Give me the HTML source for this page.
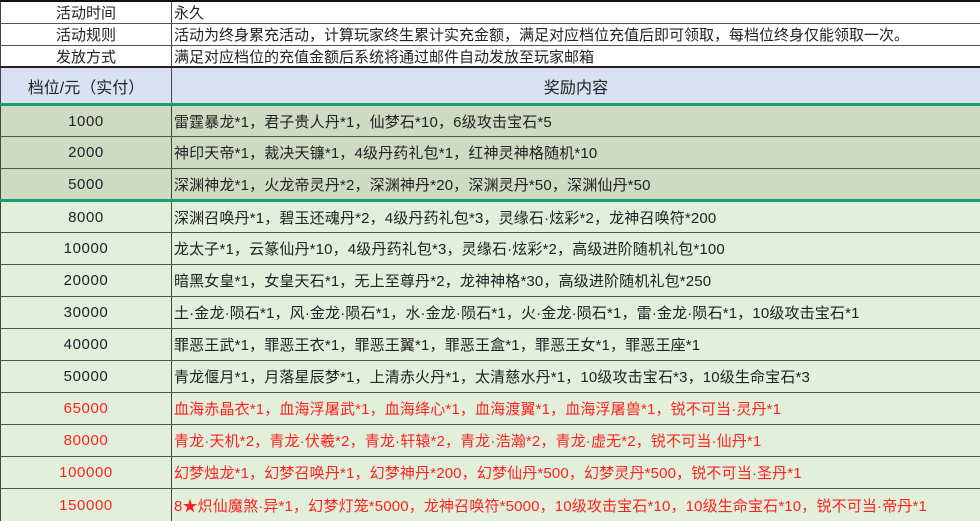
<!DOCTYPE html>
<html><head><meta charset="utf-8"><style>
*{margin:0;padding:0;box-sizing:border-box}
body{width:980px;height:521px;overflow:hidden;background:#fff;font-family:"Liberation Sans","Noto Sans CJK SC",sans-serif;font-size:15px;color:#222;position:relative}
.r{position:absolute;left:0;width:980px;border-bottom:1px solid #555}
.c1{position:absolute;left:0;width:172px;top:0;bottom:0;border-right:1.5px solid #444;border-left:1px solid #444;display:flex;align-items:center;justify-content:center;letter-spacing:0.6px}
.c2{position:absolute;left:174px;right:0;top:0;bottom:0;display:flex;align-items:center;white-space:nowrap;letter-spacing:0.15px}
.red{color:#f22}
.g1{background:#cfdac3}.g2{background:#e2efda}
</style></head><body>
<div style="position:absolute;left:0;top:0;width:980px;height:2px;background:#111"></div>
<div class="r" style="top:2px;height:22px"><div class="c1" style="letter-spacing:0">活动时间</div><div class="c2" style="letter-spacing:0">永久</div></div>
<div class="r" style="top:24px;height:22px"><div class="c1" style="letter-spacing:0">活动规则</div><div class="c2" style="letter-spacing:0">活动为终身累充活动，计算玩家终生累计实充金额，满足对应档位充值后即可领取，每档位终身仅能领取一次。</div></div>
<div class="r" style="top:46px;height:22px;border-bottom:2px solid #222"><div class="c1" style="letter-spacing:0">发放方式</div><div class="c2" style="letter-spacing:0">满足对应档位的充值金额后系统将通过邮件自动发放至玩家邮箱</div></div>
<div class="r" style="top:68px;height:35px;background:#d9e1f2;border-bottom:none"><div class="c1" style="font-size:16px;letter-spacing:0">档位/元（实付）</div><div class="c2" style="justify-content:center;left:172px;font-size:16px">奖励内容</div></div>
<div style="position:absolute;left:0;top:103px;width:980px;height:3px;background:#1f9a6c"></div>
<div class="r g1" style="top:106px;height:31px"><div class="c1">1000</div><div class="c2">雷霆暴龙*1，君子贵人丹*1，仙梦石*10，6级攻击宝石*5</div></div>
<div class="r g1" style="top:137px;height:32px"><div class="c1">2000</div><div class="c2">神印天帝*1，裁决天镰*1，4级丹药礼包*1，红神灵神格随机*10</div></div>
<div class="r g1" style="top:169px;height:30px;border-bottom:none"><div class="c1">5000</div><div class="c2">深渊神龙*1，火龙帝灵丹*2，深渊神丹*20，深渊灵丹*50，深渊仙丹*50</div></div>
<div style="position:absolute;left:0;top:199px;width:980px;height:3px;background:#1f9a6c"></div>
<div class="r g2" style="top:202px;height:31px"><div class="c1">8000</div><div class="c2">深渊召唤丹*1，碧玉还魂丹*2，4级丹药礼包*3，灵缘石·炫彩*2，龙神召唤符*200</div></div>
<div class="r g2" style="top:233px;height:32px"><div class="c1">10000</div><div class="c2">龙太子*1，云篆仙丹*10，4级丹药礼包*3，灵缘石·炫彩*2，高级进阶随机礼包*100</div></div>
<div class="r g2" style="top:265px;height:32px"><div class="c1">20000</div><div class="c2">暗黑女皇*1，女皇天石*1，无上至尊丹*2，龙神神格*30，高级进阶随机礼包*250</div></div>
<div class="r g2" style="top:297px;height:32px"><div class="c1">30000</div><div class="c2">土·金龙·陨石*1，风·金龙·陨石*1，水·金龙·陨石*1，火·金龙·陨石*1，雷·金龙·陨石*1，10级攻击宝石*1</div></div>
<div class="r g2" style="top:329px;height:32px"><div class="c1">40000</div><div class="c2">罪恶王武*1，罪恶王衣*1，罪恶王翼*1，罪恶王盒*1，罪恶王女*1，罪恶王座*1</div></div>
<div class="r g2" style="top:361px;height:32px"><div class="c1">50000</div><div class="c2">青龙偃月*1，月落星辰梦*1，上清赤火丹*1，太清慈水丹*1，10级攻击宝石*3，10级生命宝石*3</div></div>
<div class="r g2 red" style="top:393px;height:32px"><div class="c1">65000</div><div class="c2">血海赤晶衣*1，血海浮屠武*1，血海绛心*1，血海渡翼*1，血海浮屠兽*1，锐不可当·灵丹*1</div></div>
<div class="r g2 red" style="top:425px;height:32px"><div class="c1">80000</div><div class="c2">青龙·天机*2，青龙·伏羲*2，青龙·轩辕*2，青龙·浩瀚*2，青龙·虚无*2，锐不可当·仙丹*1</div></div>
<div class="r g2 red" style="top:457px;height:32px"><div class="c1">100000</div><div class="c2">幻梦烛龙*1，幻梦召唤丹*1，幻梦神丹*200，幻梦仙丹*500，幻梦灵丹*500，锐不可当·圣丹*1</div></div>
<div class="r g2 red" style="top:489px;height:32px;border-bottom:none"><div class="c1">150000</div><div class="c2">8★炽仙魔煞·异*1，幻梦灯笼*5000，龙神召唤符*5000，10级攻击宝石*10，10级生命宝石*10，锐不可当·帝丹*1</div></div>
</body></html>
